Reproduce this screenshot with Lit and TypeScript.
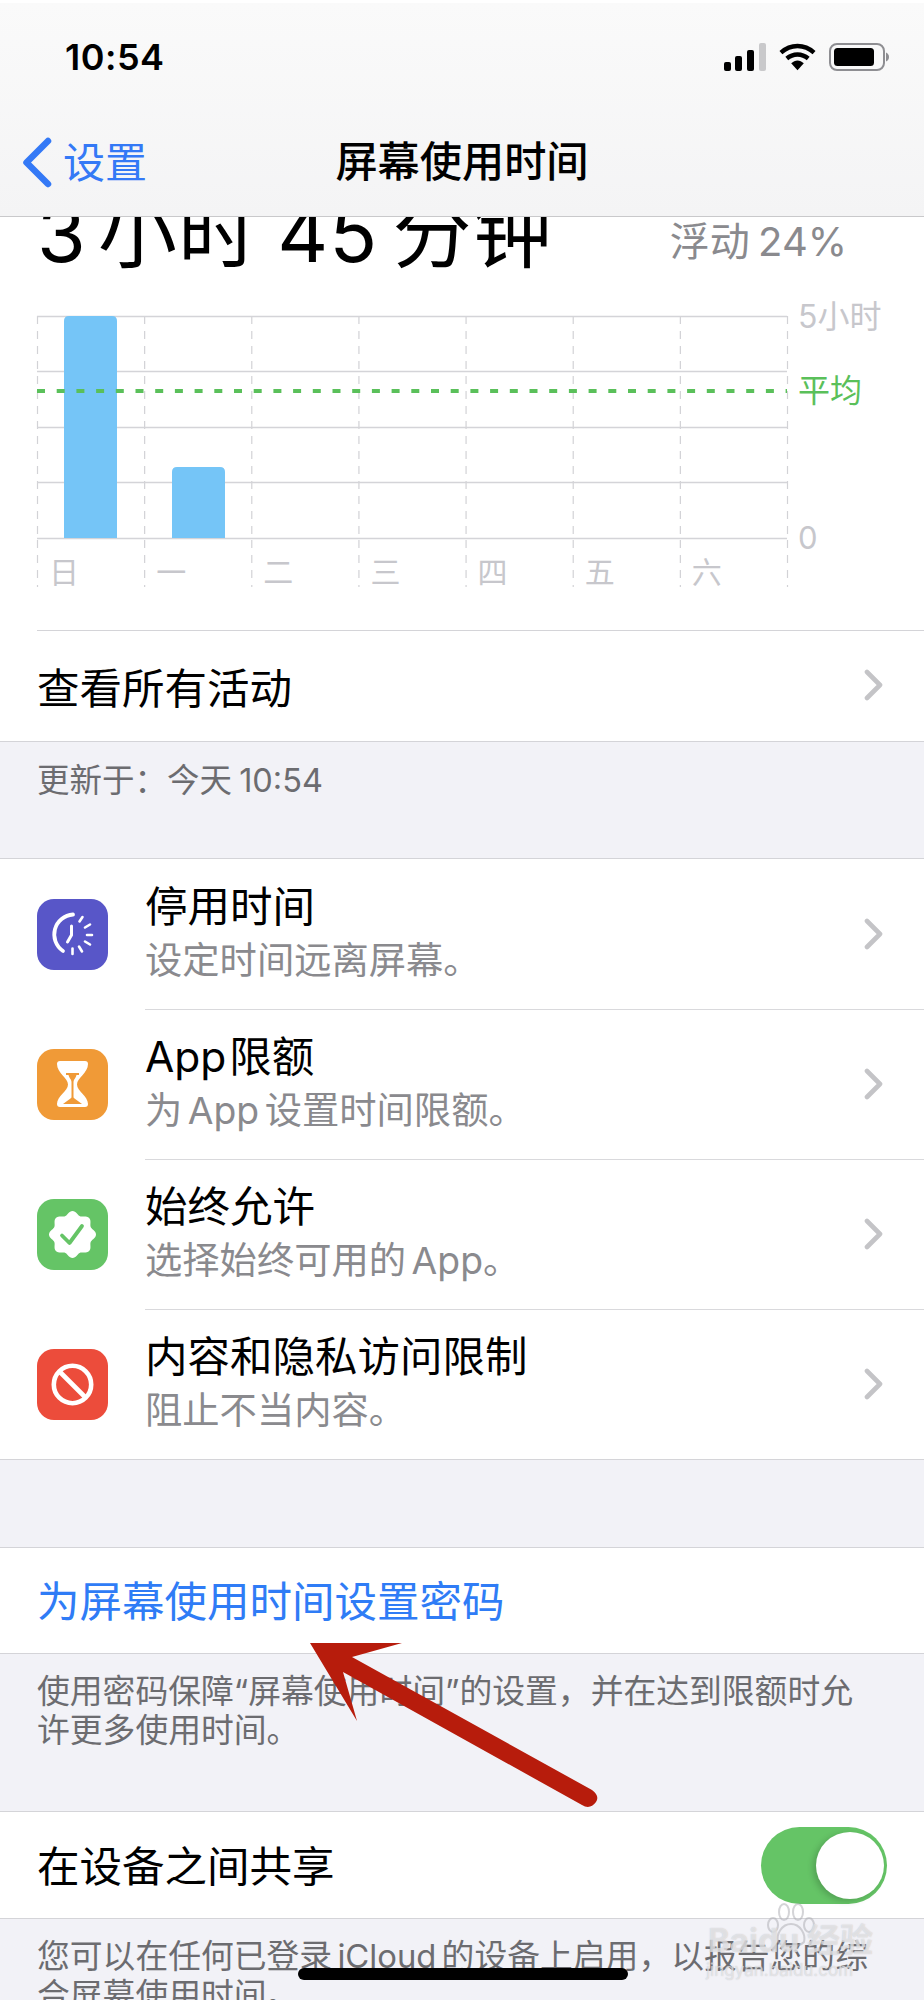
import { LitElement, html, css, svg } from "lit";
import { customElement } from "lit/decorators.js";

const days = ["日", "一", "二", "三", "四", "五", "六"];
const values = [222, 71, 0, 0, 0, 0, 0];
const colW = 750 / 7;

const chevron = html`<svg class="chev" width="20" height="32" viewBox="0 0 20 32"><path d="M3 3l13 13L3 29" fill="none" stroke="#c4c4c7" stroke-width="4.6" stroke-linecap="round" stroke-linejoin="round"/></svg>`;

const clockIcon = html`<svg viewBox="0 0 71 71" width="71" height="71"><rect width="71" height="71" rx="17" fill="#5856c8"/>
<g fill="none" stroke="#fff" stroke-linecap="round">
<path d="M36 15.500A20 20 0 0 0 26 52" stroke-width="3.800"/>
<path d="M34.500 27V36L30.500 43" stroke-width="3"/>
<path d="M42.500 22.500L45.500 18M48 28.500L53 25.500M50 36H55M48 42.500L53 45.500M42 47.500L45 52.500M35.500 49.500V55" stroke-width="2.600"/>
</g></svg>`;

const hourglassIcon = html`<svg viewBox="0 0 71 71" width="71" height="71"><rect width="71" height="71" rx="17" fill="#f09a37"/>
<path d="M23 12H48Q51 12 51 15C51 24 40 29 40 35.500C40 42 51 47 51 55Q51 58 48 58H23Q20 58 20 55C20 47 31 42 31 35.500C31 29 20 24 20 15Q20 12 23 12Z" fill="#fff"/>
<path d="M29 25H42M35.500 25V50" stroke="#f09a37" stroke-width="2" fill="none"/>
<path d="M31.500 26C33 31 35.500 31 35.500 36C35.500 31 38 31 39.500 26Z" fill="#f09a37"/>
<path d="M26 55L35.500 48L45 55Z" fill="#f09a37"/></svg>`;

const badgePath = () => {
  let d = "";
  for (let i = 0; i < 360; i += 3) {
    const a = (i * Math.PI) / 180;
    const r = 21.6 + 1.9 * Math.cos(8 * a);
    d += `${i ? "L" : "M"}${(35.5 + r * Math.sin(a)).toFixed(2)} ${(35.5 - r * Math.cos(a)).toFixed(2)}`;
  }
  return d + "Z";
};
const checkIcon = html`<svg viewBox="0 0 71 71" width="71" height="71"><rect width="71" height="71" rx="17" fill="#65c466"/>
<path d="${badgePath()}" fill="#fff"/>
<path d="M25 36.500L32.500 44L45 27" fill="none" stroke="#65c466" stroke-width="3.800" stroke-linecap="round" stroke-linejoin="round"/></svg>`;

const banIcon = html`<svg viewBox="0 0 71 71" width="71" height="71"><rect width="71" height="71" rx="17" fill="#ec4c3b"/>
<circle cx="35.500" cy="35.500" r="18.700" fill="none" stroke="#fff" stroke-width="4.600"/>
<path d="M22.500 22.500L48.500 48.500" stroke="#fff" stroke-width="4.600"/></svg>`;

const rows = [
  { icon: clockIcon, title: "停用时间", sub: "设定时间远离屏幕。" },
  { icon: hourglassIcon, title: "App 限额", sub: "为 App 设置时间限额。" },
  { icon: checkIcon, title: "始终允许", sub: "选择始终可用的 App。" },
  { icon: banIcon, title: "内容和隐私访问限制", sub: "阻止不当内容。" },
];

@customElement("app-root")
export class AppRoot extends LitElement {
  static styles = css`
    :host {
      display: block;
      position: relative;
      width: 924px;
      height: 2000px;
      overflow: hidden;
      background: #f2f2f7;
      font-family: Inter, "Noto Sans CJK SC", sans-serif;
      color: #000;
    }
    .page { display: flex; flex-direction: column; height: 2000px; }
    .top {
      height: 217px;
      flex: none;
      box-sizing: border-box;
      background: linear-gradient(#fafafa, #f4f4f5);
      border-top: 3px solid #fff;
      border-bottom: 1px solid #c9c9cb;
      display: flex;
      flex-direction: column;
      position: relative;
      z-index: 1;
    }
    .status {
      height: 82px;
      padding: 0 35px 0 65px;
      display: flex;
      align-items: center;
      justify-content: space-between;
    }
    .time { font-size: 36px; font-weight: 600; line-height: 1; margin-top: 25px; letter-spacing: .5px; }
    .status-icons { display: flex; align-items: center; gap: 13px; margin-top: 25px; }
    .nav { flex: 1; display: grid; grid-template-columns: 1fr auto 1fr; align-items: center; padding: 29px 22px 5px; }
    .back { display: flex; align-items: center; gap: 11px; color: #3479f6; font-size: 42px; line-height: 1; }
    .nav-title { font-size: 42.200px; font-weight: 500; line-height: 1; }
    .scroll { flex: 1; overflow: hidden; min-height: 0; }
    .white { background: #fff; }
    .summary { height: 524px; border-bottom: 1px solid #d4d4d8; display: flex; flex-direction: column; }
    .head { display: flex; justify-content: space-between; align-items: flex-start; padding: 0 77px 0 37px; margin-top: -35px; height: 134px; flex: none; }
    .big { font-size: 79px; line-height: 102px; word-spacing: -4px; letter-spacing: 1px; white-space: pre; }
    .big .w1 { word-spacing: -12px; }
    .big .w2 { word-spacing: -9px; }
    .drift { font-size: 40px; color: #8a8a8e; line-height: 39px; margin-top: 40px; word-spacing: -3px; }
    .chart { display: block; flex: none; overflow: visible; }
    .chart text { font-family: Inter, "Noto Sans CJK SC", sans-serif; }
    .all {
      margin: 43px 0 0 37px;
      padding-bottom: 2px;
      flex: 1;
      border-top: 1px solid #d4d4d8;
      display: flex;
      align-items: center;
      justify-content: space-between;
      padding-right: 40px;
      font-size: 42.500px;
    }
    .note { font-size: 32.500px; color: #6c6c70; line-height: 40px; padding: 19px 37px 0; height: 97px; word-spacing: -2px; }
    .group { border-top: 1px solid #d4d4d8; border-bottom: 1px solid #d4d4d8; }
    .row { height: 150px; display: flex; align-items: center; padding-left: 37px; box-sizing: border-box; }
    .row .ic { width: 71px; height: 71px; flex: none; }
    .row .ic svg { display: block; }
    .row .body {
      flex: 1;
      margin-left: 37px;
      height: 100%;
      display: flex;
      align-items: center;
      justify-content: space-between;
      padding-right: 40px;
      border-bottom: 1px solid #d9d9dc;
    }
    .row:last-child .body { border-bottom: none; }
    .t { font-size: 42.500px; line-height: 54px; word-spacing: -9px; }
    .s { font-size: 37.300px; line-height: 54px; color: #8a8a8e; word-spacing: -5px; }
    .chev { display: block; flex: none; }
    .gap1 { height: 87px; }
    .link { height: 107px; display: flex; align-items: center; padding: 0 0 4px 37px; color: #2f7cf6; font-size: 42.500px; box-sizing: border-box; border-top: 1px solid #d4d4d8; border-bottom: 1px solid #d4d4d8; }
    .foot { font-size: 32.800px; line-height: 39px; color: #6c6c70; padding: 18px 37px 0; word-spacing: -4px; white-space: nowrap; }
    .foot.a { height: 139px; }
    .share { height: 108px; display: flex; align-items: center; justify-content: space-between; padding: 0 37px; font-size: 42.500px; box-sizing: border-box; border-top: 1px solid #d4d4d8; border-bottom: 1px solid #d4d4d8; }
    .share span { margin-bottom: 4px; }
    .switch { width: 126px; height: 77px; border-radius: 39px; background: #65c466; display: flex; align-items: center; justify-content: flex-end; padding-right: 3px; box-sizing: border-box; }
    .knob { width: 68px; height: 67px; border-radius: 50%; background: #fff; box-shadow: -3px 2px 6px rgba(0,0,0,.18); }
    .home { position: absolute; left: 298px; top: 1968px; width: 330px; height: 12px; border-radius: 6px; background: #000; z-index: 3; }
    .arrow { position: absolute; left: 0; top: 0; z-index: 2; pointer-events: none; }
    .mark { position: absolute; left: 706px; top: 1902px; width: 170px; height: 80px; z-index: 4; pointer-events: none; }
    .mark svg { position: absolute; left: 58px; top: 0; }
    .mark .b { position: absolute; left: 2px; top: 20px; font-size: 33px; font-weight: 700; line-height: 36px; white-space: nowrap; color: rgba(255,255,255,.5); text-shadow: 0 0 1px rgba(170,170,175,.7); }
    .mark .u { position: absolute; left: 0; top: 58px; font-size: 17px; line-height: 20px; white-space: nowrap; color: rgba(255,255,255,.5); text-shadow: 0 0 1px rgba(170,170,175,.7); }
  `;

  render() {
    return html`
      <div class="page">
        <div class="top">
          <div class="status">
            <span class="time">10:54</span>
            <div class="status-icons">
              <svg width="42" height="28" viewBox="0 0 42 28">
                <rect x="0" y="19" width="7" height="9" rx="2" fill="#000"/>
                <rect x="11" y="13" width="7" height="15" rx="2" fill="#000"/>
                <rect x="23" y="7" width="7" height="21" rx="2" fill="#000"/>
                <rect x="35" y="0" width="7" height="28" rx="2" fill="#c9c9cb"/>
              </svg>
              <svg width="37" height="28" viewBox="0 0 38 28">
                <path d="M2 9.500C12 .5 26 .5 36 9.500M8 15.500C14.500 10 23.500 10 30 15.500" fill="none" stroke="#000" stroke-width="4.500" stroke-linecap="butt"/>
                <path d="M12.500 20.500C16.500 16.500 21.500 16.500 25.500 20.500L19 27.500Z" fill="#000"/>
              </svg>
              <svg width="60" height="28" viewBox="0 0 60 28">
                <rect x="1" y="1" width="54" height="26" rx="7" fill="none" stroke="#8e8e92" stroke-width="2"/>
                <rect x="5" y="5" width="40" height="18" rx="3.500" fill="#000"/>
                <path d="M57 9.500Q60 11 60 14T57 18.500Z" fill="#8e8e92"/>
              </svg>
            </div>
          </div>
          <div class="nav">
            <div class="back">
              <svg width="30" height="51" viewBox="0 0 30 51"><path d="M26 4L4.500 25.500L26 47" fill="none" stroke="#3479f6" stroke-width="6.500" stroke-linecap="round" stroke-linejoin="round"/></svg>
              <span>设置</span>
            </div>
            <div class="nav-title">屏幕使用时间</div>
            <div></div>
          </div>
        </div>
        <div class="scroll">
          <div class="white summary">
            <div class="head"><span class="big"><span class="w1">3 </span>小时 <span class="w2">45 </span>分钟</span><span class="drift">浮动 24%</span></div>
            ${this.chart()}
            <div class="all"><span>查看所有活动</span>${chevron}</div>
          </div>
          <div class="note">更新于：今天 10:54</div>
          <div class="white group">
            ${rows.map(
              (r) => html`<div class="row">
                <div class="ic">${r.icon}</div>
                <div class="body">
                  <div><div class="t">${r.title}</div><div class="s">${r.sub}</div></div>
                  ${chevron}
                </div>
              </div>`
            )}
          </div>
          <div class="gap1"></div>
          <div class="white link">为屏幕使用时间设置密码</div>
          <div class="foot a">使用密码保障“屏幕使用时间”的设置，并在达到限额时允<br />许更多使用时间。</div>
          <div class="white share"><span>在设备之间共享</span><div class="switch"><div class="knob"></div></div></div>
          <div class="foot">您可以在任何已登录 iCloud 的设备上启用，以报告您的综<br />合屏幕使用时间。</div>
        </div>
      </div>
      <svg class="arrow" width="924" height="2000" viewBox="0 0 924 2000">
        <path d="M310 1643L402 1643L352 1657L592 1790Q600 1796 596 1802Q590 1810 582 1805L343 1672L357 1721Z" fill="#b71c0c"/>
      </svg>
      <div class="mark">
        <svg width="56" height="48" viewBox="0 0 56 48" fill="none" stroke="rgba(170,170,175,.5)" stroke-width="2">
          <ellipse cx="20" cy="10" rx="5" ry="8"/><ellipse cx="34" cy="10" rx="5" ry="8"/><ellipse cx="9" cy="23" rx="5" ry="7"/><ellipse cx="45" cy="23" rx="5" ry="7"/>
          <path d="M27 22C18 22 12 32 14 40C20 46 34 46 40 40C42 32 36 22 27 22Z"/>
        </svg>
        <div class="b">Baidu 经验</div>
        <div class="u">jingyan.baidu.com</div>
      </div>
      <div class="home"></div>
    `;
  }

  chart() {
    const h = [0, 55, 111, 166, 222];
    return html`<svg class="chart" width="924" height="271" viewBox="0 0 924 271">
      ${[...Array(8).keys()].map((i) => {
        const x = 37.500 + i * colW;
        return svg`<path d="M${x} 0V222M${x} 224V271" stroke="#d2d2d6" stroke-width="1.200" stroke-dasharray="8 7" fill="none"/>`;
      })}
      ${h.map((y) => svg`<path d="M37 ${y + 0.5}H787" stroke="#d4d4d8" stroke-width="1.500"/>`)}
      ${values.map((v, i) =>
        v
          ? svg`<path d="M${64 + i * 108} 222V${222 - v + 5}q0-5 5-5h43q5 0 5 5V222Z" fill="#75c5f7"/>`
          : ""
      )}
      <path d="M37 75H787" stroke="#5ac05a" stroke-width="4" stroke-dasharray="8 11.700"/>
      ${days.map(
        (d, i) => svg`<text x="${64 + i * colW}" y="267" text-anchor="middle" font-size="30" fill="#c7c7cc">${d}</text>`
      )}
      <text x="798" y="12" font-size="32" fill="#c7c7cc">5小时</text>
      <text x="798" y="86" font-size="32" fill="#5ac05a">平均</text>
      <text x="798" y="233" font-size="31" fill="#c7c7cc">0</text>
    </svg>`;
  }
}
